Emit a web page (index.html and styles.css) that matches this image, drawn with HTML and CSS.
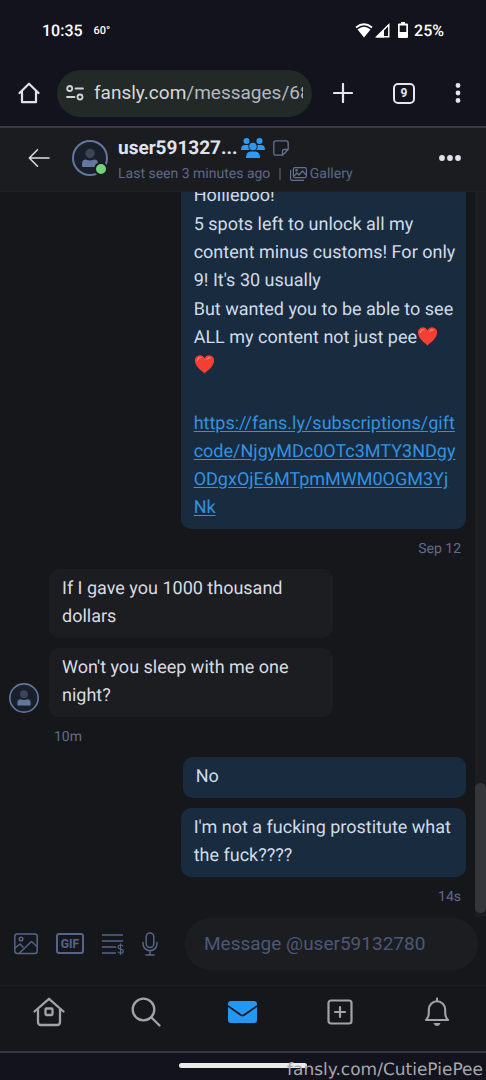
FILE: index.html
```html
<!DOCTYPE html>
<html lang="en">
<head>
<meta charset="utf-8">
<meta name="viewport" content="width=device-width, initial-scale=1">
<title>Messages</title>
<link rel="stylesheet" href="styles.css">
</head>
<body>
<svg class="defs" aria-hidden="true">
  <symbol id="heart" viewBox="0 0 20 19"><path d="M10 18.5C7 15.500 .5 11.500 .5 6A5 5 0 0 1 10 3.300 5 5 0 0 1 19.500 6C19.500 11.500 13 15.500 10 18.500z" fill="#f43f35"/><path d="M3 5.500Q3.500 2.500 6.300 2.700M12.500 4Q14 2.400 15.600 3" fill="none" stroke="#ff8379" stroke-width="1.300" stroke-linecap="round"/></symbol>
  <symbol id="person" viewBox="0 0 36 36"><circle cx="18" cy="18" r="17" fill="#19202c" stroke="#65769f" stroke-width="2"/><circle cx="18" cy="13.500" r="4.700" fill="#3c4458"/><path d="M10 26v-2.500a4 4 0 0 1 4-4q4 2 8 0a4 4 0 0 1 4 4V26q0 1-1 1H11q-1 0-1-1z" fill="#65769f"/></symbol>
</svg>
<div class="app">
  <div class="status">
    <div class="status-group"><span class="clock">10:35</span><span class="temp">60°</span></div>
    <div class="status-group signals">
      <svg width="18" height="15" viewBox="0 0 18 15"><path d="M1 4.500Q9-2 17 4.500" fill="none" stroke="#fff" stroke-width="1.700"/><path d="M2.500 6.500Q9 1.200 15.500 6.500L9 14.500z" fill="#fff"/></svg>
      <svg width="15" height="15" viewBox="0 0 15 15"><path d="M1.700 13.800L13.800 1.700v12.100z" fill="none" stroke="#fff" stroke-width="1.400"/><path d="M1 14.500L9 6.500v8z" fill="#fff"/></svg>
      <svg class="battery" width="10" height="16" viewBox="0 0 10 16"><path d="M3 0h4v1.500h2q1 0 1 1V15q0 1-1 1H1q-1 0-1-1V2.500q0-1 1-1h2zM1.700 3.500V10h6.600V3.500z" fill="#fff" fill-rule="evenodd"/></svg>
      <span>25%</span>
    </div>
  </div>
  <div class="browser">
    <button class="plain home" aria-label="Home"><svg width="22" height="22" viewBox="0 0 22 22"><path d="M1.500 11L11 1.700 20.500 11M4 9.500v10.700h14V9.500" fill="none" stroke="#dfe1ec" stroke-width="2.200" stroke-linejoin="round" stroke-linecap="round"/></svg></button>
    <button class="address">
      <svg width="18" height="16" viewBox="0 0 18 16" fill="none" stroke="#d0d3d5" stroke-width="1.800" stroke-linecap="round"><circle cx="3.700" cy="3.500" r="2.500"/><path d="M9.500 3.500H17M1 12h7.500"/><circle cx="14" cy="12" r="2.500"/></svg>
      <span class="url"><b>fansly.com</b>/messages/68</span>
    </button>
    <div class="browser-actions">
      <button class="plain" aria-label="New tab"><svg width="20" height="20" viewBox="0 0 20 20"><path d="M10 1v18M1 10h18" stroke="#e3e5f0" stroke-width="2.200" stroke-linecap="round"/></svg></button>
      <button class="plain tabs" aria-label="9 open tabs">9</button>
      <button class="plain" aria-label="Menu"><svg width="6" height="20" viewBox="0 0 6 20" fill="#e3e5f0"><circle cx="3" cy="2.500" r="2.400"/><circle cx="3" cy="10" r="2.400"/><circle cx="3" cy="17.500" r="2.400"/></svg></button>
    </div>
  </div>
  <header class="chat-head">
    <button class="plain back" aria-label="Back"><svg width="22" height="20" viewBox="0 0 22 20" fill="none" stroke="#dcdfe8" stroke-width="1.500" stroke-linecap="round" stroke-linejoin="round"><path d="M21 10H1.500M9.500 1.800L1.300 10l8.200 8.200"/></svg></button>
    <div class="avatar"><svg width="36" height="36"><use href="#person"/></svg><span class="online"></span></div>
    <div class="who">
      <div class="name-row">
        <h1>user591327...</h1>
        <svg class="group" width="24" height="20" viewBox="0 0 24 20" fill="#2d9bf5"><circle cx="5.500" cy="3" r="3"/><circle cx="18.500" cy="3" r="3"/><path d="M0 12q0-5 4-5h3.500Q7 11 9 12zM24 12q0-5-4-5h-3.500Q17 11 15 12z"/><circle cx="12" cy="8.500" r="3.700"/><path d="M5 20q0-6.500 4.500-6.500h5Q19 13.500 19 20z"/></svg>
        <svg width="16" height="16" viewBox="0 0 16 16" fill="none" stroke="#65708f" stroke-width="1.300" stroke-linejoin="round"><path d="M9.500 15.200H3Q.8 15.200 .8 13V3Q.8.8 3 .8h10q2.200 0 2.200 2.200v6.500zM9.500 15.200V11q0-1.500 1.500-1.500h4.200"/></svg>
      </div>
      <div class="seen"><span>Last seen 3 minutes ago</span><span class="bar">|</span>
        <a href="#gallery"><svg width="17" height="14" viewBox="0 0 17 14" fill="none" stroke="#65708f" stroke-width="1.200" stroke-linejoin="round"><rect x="3.400" y=".6" width="13" height="10" rx="1.500"/><path d="M.6 3v8.500q0 1.900 1.900 1.900H14M4 9l3-3 2 2 3.500-4L16 8"/><circle cx="6.500" cy="3.300" r=".8"/></svg>Gallery</a></div>
    </div>
    <button class="plain" aria-label="More"><svg width="22" height="6" viewBox="0 0 22 6" fill="#dfe3ee"><circle cx="3" cy="3" r="2.900"/><circle cx="11" cy="3" r="2.900"/><circle cx="19" cy="3" r="2.900"/></svg></button>
  </header>
  <main class="chat">
    <div class="thread">
      <div class="bubble mine long">
        <p>Hollieboo!</p>
        <p>5 spots left to unlock all my content minus customs! For only 9! It's 30 usually</p>
        <p>But wanted you to be able to see ALL my content not just pee<svg class="heart" role="img" aria-label="heart"><use href="#heart"/></svg><svg class="heart" role="img" aria-label="heart"><use href="#heart"/></svg></p>
        <p>&nbsp;</p>
        <p><a href="#gift">https://fans.ly/subscriptions/gift<wbr>code/NjgyMDc0OTc3MTY3NDgy<wbr>ODgxOjE6MTpmMWM0OGM3Yj<wbr>Nk</a></p>
      </div>
      <time class="right">Sep 12</time>
      <div class="received">
        <svg class="mini" width="30" height="30" viewBox="0 0 36 36"><use href="#person"/></svg>
        <div class="stack">
          <div class="bubble">If I gave you 1000 thousand dollars</div>
          <div class="bubble">Won't you sleep with me one night?</div>
        </div>
      </div>
      <time class="left">10m</time>
      <div class="stack sent">
        <div class="bubble mine">No</div>
        <div class="bubble mine long">I'm not a fucking prostitute what the fuck????</div>
      </div>
      <time class="right">14s</time>
    </div>
    <div class="track"><div class="thumb"></div></div>
  </main>
  <div class="composer">
    <button class="plain" aria-label="Image"><svg width="24" height="22" viewBox="0 0 24 22" fill="none" stroke="#56648a" stroke-width="1.500" stroke-linejoin="round"><rect x=".8" y="1" width="22.400" height="19.500" rx="2.500"/><circle cx="7" cy="6" r="1.800"/><path d="M1 15l5-4 3.500 3.500M5 20.500L17.500 8.500l5.500 5"/></svg></button>
    <button class="plain gif">GIF</button>
    <button class="plain" aria-label="Price list"><svg width="22" height="22" viewBox="0 0 22 22" fill="none" stroke="#56648a"><path d="M0 2h21M0 8h21M0 14h14M0 20h14" stroke-width="1.700"/><path d="M21 13.500q-.8-1.500-2.600-1.500-2.400 0-2.400 1.900 0 1.500 2.500 2.100 2.800.6 2.800 2.300 0 1.900-2.700 1.900-2 0-2.900-1.500M18.500 10.500V22" stroke-width="1.200"/></svg></button>
    <button class="plain" aria-label="Record voice"><svg width="16" height="24" viewBox="0 0 16 24" fill="none" stroke="#56648a" stroke-width="1.500" stroke-linecap="round"><rect x="4.200" y="1" width="7.600" height="14.500" rx="3.800"/><path d="M1 10.500v1.200a7 7 0 0 0 14 0v-1.200M8 19v4M4 23h8"/></svg></button>
    <input type="text" aria-label="Message" placeholder="Message @user59132780">
  </div>
  <nav class="tabbar">
    <a href="#home" aria-label="Home"><svg width="32" height="30" viewBox="0 0 32 30" fill="none" stroke="#a2a2aa" stroke-width="2.300" stroke-linejoin="round" stroke-linecap="round"><path d="M1.500 14.500L16 1.800l14.500 12.700M5 12v13q0 3 3 3h16q3 0 3-3V12"/><rect x="12.500" y="11.500" width="7" height="6.500" rx="1"/></svg></a>
    <a href="#search" aria-label="Search"><svg width="30" height="30" viewBox="0 0 30 30" fill="none" stroke="#a2a2aa" stroke-width="2.300" stroke-linecap="round"><circle cx="12.500" cy="12.500" r="10.800"/><path d="M20.500 20.500l8 8"/></svg></a>
    <a href="#messages" aria-label="Messages"><svg width="29" height="22" viewBox="0 0 29 22"><rect width="29" height="22" rx="3" fill="#2497f3"/><path d="M0 5l12.500 8.800q2 1.400 4 0L29 5" fill="none" stroke="#16181d" stroke-width="1.700"/></svg></a>
    <a href="#new" aria-label="New post"><svg width="26" height="26" viewBox="0 0 26 26" fill="none" stroke="#a2a2aa" stroke-width="2.200" stroke-linecap="round"><rect x="1.500" y="1.500" width="23" height="23" rx="2.500"/><path d="M13 8v10M8 13h10"/></svg></a>
    <a href="#alerts" aria-label="Notifications"><svg width="26" height="30" viewBox="0 0 26 30" fill="none" stroke="#a2a2aa" stroke-width="2.100" stroke-linejoin="round" stroke-linecap="round"><path d="M13 1.500v2M2 23q2.800-3 2.800-7v-3.500a8.200 8.200 0 0 1 16.400 0V16q0 4 2.800 7z"/><path d="M9.500 26h7q-1 3-3.500 3t-3.500-3z" fill="#a2a2aa" stroke="none"/></svg></a>
  </nav>
  <footer class="system"><div class="pill"></div><span class="mark">fansly.com/CutiePiePee</span></footer>
</div>
</body>
</html>
```
FILE: styles.css
```css
* { box-sizing: border-box; }
body { margin: 0; background: #16171b; color: #d8dbe2; font-family: Roboto, "Noto Sans", sans-serif; text-rendering: geometricPrecision; }
h1, p { margin: 0; }
svg { display: block; flex: none; }
.defs { width: 0; height: 0; position: absolute; }
.app { height: 100vh; display: flex; flex-direction: column; overflow: hidden; }
.plain { border: 0; padding: 0; background: none; color: inherit; font-family: inherit; flex: none; cursor: pointer; }

.status { height: 60px; flex: none; padding: 0 42px; display: flex; align-items: center; justify-content: space-between; background: #12131d; color: #fff; font-size: 16px; font-weight: 500; }
.status-group { display: flex; align-items: center; gap: 11px; }
.temp { font-size: 11px; }
.signals { gap: 2px; }
.battery { margin: 0 4px 0 6px; }

.browser { height: 66px; flex: none; padding: 0 25px 0 18px; display: flex; align-items: center; background: #12131d; }
.address { flex: 1; min-width: 0; height: 47px; margin: 0 21px 0 17px; border: 0; border-radius: 24px; padding: 0 9px; display: flex; align-items: center; gap: 10px; background: #232927; color: #b4b8c4; font-family: inherit; font-size: 19px; }
.url { flex: 1; min-width: 0; overflow: hidden; white-space: nowrap; text-align: left; line-height: 28px; }
.url b { font-weight: 400; color: #d5d8dc; }
.browser-actions { display: flex; align-items: center; gap: 40px; }
.tabs { width: 22px; height: 21px; border: 2px solid #e3e5f0; border-radius: 5px; color: #e3e5f0; font-size: 12px; font-weight: 700; line-height: 16px; }

.chat-head { height: 66px; flex: none; padding: 0 25px 3px 28px; display: flex; align-items: center; background: #1b1c20; border-top: 2px solid #3a3a44; border-bottom: 1px solid #202126; }
.back { margin-right: 22px; }
.avatar { position: relative; margin-right: 10px; }
.online { position: absolute; right: 0; bottom: 0; width: 14px; height: 14px; border: 2px solid #1b1c20; border-radius: 50%; background: #77d17b; }
.who { flex: 1; min-width: 0; padding-top: 3px; }
.name-row { display: flex; align-items: center; gap: 8px; height: 28px; }
.name-row h1 { font-size: 19px; font-weight: 700; line-height: 28px; color: #dfe3ee; }
.group { margin-left: -5px; }
.seen { display: flex; align-items: center; gap: 8px; height: 24px; font-size: 14px; color: #5d6887; white-space: nowrap; }
.seen a { display: flex; align-items: center; gap: 3px; color: inherit; text-decoration: none; }

.chat { flex: 1; min-height: 0; display: flex; overflow: hidden; }
.thread { flex: 1; display: flex; flex-direction: column; justify-content: flex-end; padding: 0 9px; }
.track { width: 11px; flex: none; display: flex; flex-direction: column; justify-content: flex-end; padding-bottom: 4px; background: #1c1d21; }
.thumb { height: 18%; border-radius: 6px; background: #35363a; }
.stack { display: flex; flex-direction: column; gap: 10px; flex: 1; }
.sent { flex: none; }
.bubble { width: 62%; padding: 6px 13px 7px; border-radius: 10px; background: #1c1d21; font-size: 18px; line-height: 28px; }
.mine { align-self: flex-end; background: #192b3e; color: #d0dbe9; }
.received .bubble { width: 68%; }
.long { width: calc(62% + 2px); padding-right: 10px; display: flex; flex-direction: column; gap: 1px; }
.bubble a { color: #3392e0; text-underline-offset: 2px; }
.heart { display: inline-block; width: 21px; height: 19px; vertical-align: -3px; }
.received { display: flex; align-items: flex-end; gap: 10px; }
.mini { margin-bottom: 4px; }
time { height: 40px; flex: none; line-height: 41px; font-size: 14px; color: #626b8a; padding: 0 5px; }
.right { text-align: right; }
.left { padding-left: 45px; }

.composer { height: 69px; flex: none; padding: 1px 8px 16px 14px; display: flex; align-items: center; gap: 18px; border-bottom: 1px solid #1c1d21; }
.gif { width: 28px; height: 21px; border: 2px solid #56648a; border-radius: 3px; color: #56648a; font-size: 12px; font-weight: 700; line-height: 16px; }
.composer input { flex: 1; min-width: 0; height: 52px; margin-left: 9px; padding: 0 19px; border: 0; border-radius: 26px; background: #1c1d21; color: #d8dbe2; font-family: inherit; font-size: 19px; }
.composer input::placeholder { color: #4d5874; opacity: 1; }
.tabbar { height: 67px; flex: none; display: grid; grid-template-columns: repeat(5, 1fr); padding-bottom: 14px; border-bottom: 2px solid #36363e; }
.tabbar a { display: flex; align-items: center; justify-content: center; }
.system { position: relative; height: 27px; flex: none; padding-top: 10px; background: #12131d; }
.pill { width: 128px; height: 5px; margin: 0 auto; border-radius: 3px; background: #ebebeb; }
.mark { position: absolute; right: 3px; bottom: 0; font-family: "DejaVu Sans", sans-serif; font-size: 17px; line-height: 20px; color: #a9a9ae; }
```
